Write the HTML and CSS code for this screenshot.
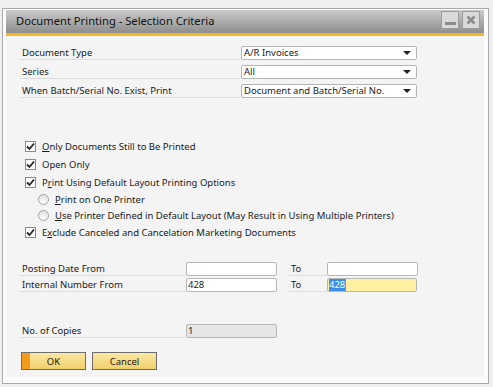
FILE: index.html
```html
<!DOCTYPE html>
<html lang="en">
  <head>
    <meta charset="UTF-8" />
    <title>Document Printing - Selection Criteria</title>
    <link rel="stylesheet" href="styles.css">
  </head>
  <body>
    <div class="window">
      <div class="titlebar">
        <span class="title">Document Printing - Selection Criteria</span>
        <div class="win-btns">
          <span class="win-btn">
            <svg width="11" height="3" viewBox="0 0 11 3"><rect width="11" height="3" fill="#8c8c8c" /></svg>
          </span>
          <span class="win-btn">
            <svg width="10" height="10" viewBox="0 0 10 10"><path d="M1.5 1.5 L8.5 8.5 M8.5 1.5 L1.5 8.5" stroke="#8c8c8c" stroke-width="2.6" /></svg>
          </span>
        </div>
      </div>

      <div class="content">
        <div class="fields">
          <div class="field-row">
            <span class="label">Document Type</span>
            <div class="select">A/R Invoices<span class="arrow"></span></div>
          </div>
          <div class="field-row">
            <span class="label">Series</span>
            <div class="select">All<span class="arrow"></span></div>
          </div>
          <div class="field-row">
            <span class="label">When Batch/Serial No. Exist, Print</span>
            <div class="select">Document and Batch/Serial No.<span class="arrow"></span></div>
          </div>
        </div>

        <div class="options">
          <div class="check">
            <span class="box"><svg width="9" height="9" viewBox="0 0 9 9"><path d="M1 4.5 L3.5 7 L8 1.5" fill="none" stroke="#222" stroke-width="1.8" /></svg></span>
            <span><u>O</u>nly Documents Still to Be Printed</span>
          </div>
          <div class="check">
            <span class="box"><svg width="9" height="9" viewBox="0 0 9 9"><path d="M1 4.5 L3.5 7 L8 1.5" fill="none" stroke="#222" stroke-width="1.8" /></svg></span>
            <span>Open Only</span>
          </div>
          <div class="check">
            <span class="box"><svg width="9" height="9" viewBox="0 0 9 9"><path d="M1 4.5 L3.5 7 L8 1.5" fill="none" stroke="#222" stroke-width="1.8" /></svg></span>
            <span>P<u>r</u>int Using Default Layout Printing Options</span>
          </div>
          <div class="radio">
            <span class="dot"></span>
            <span><u>P</u>rint on One Printer</span>
          </div>
          <div class="radio">
            <span class="dot"></span>
            <span><u>U</u>se Printer Defined in Default Layout (May Result in Using Multiple Printers)</span>
          </div>
          <div class="check">
            <span class="box"><svg width="9" height="9" viewBox="0 0 9 9"><path d="M1 4.5 L3.5 7 L8 1.5" fill="none" stroke="#222" stroke-width="1.8" /></svg></span>
            <span>E<u>x</u>clude Canceled and Cancelation Marketing Documents</span>
          </div>
        </div>

        <div class="ranges">
          <div class="range-row">
            <span class="label short">Posting Date From</span>
            <div class="input"></div>
            <span class="to">To</span>
            <div class="input"></div>
          </div>
          <div class="range-row">
            <span class="label short">Internal Number From</span>
            <div class="input">428</div>
            <span class="to">To</span>
            <div class="input active"><span class="selected">428</span><span class="caret"></span></div>
          </div>
        </div>

        <div class="range-row copies">
          <span class="label short">No. of Copies</span>
          <div class="input disabled">1</div>
        </div>

        <div class="buttons">
          <button class="btn default">OK</button>
          <button class="btn">Cancel</button>
        </div>
      </div>
    </div>
  </body>
</html>
```

FILE: styles.css
```css
* {
  box-sizing: border-box;
  margin: 0;
  padding: 0;
}

body {
  background-color: #efefef;
  font-family: "Noto Sans", Arial, sans-serif;
  font-size: 9.5px;
  color: #1a1a1a;
}

.window {
  width: 487px;
  height: 376px;
  margin: 8px 0 0 2px;
  padding: 1px 4px 6px 3px;
  border: 1px solid #a9a9a9;
  background-color: #fbfbfb;
  display: flex;
  flex-direction: column;
}

.titlebar {
  height: 26px;
  flex-shrink: 0;
  display: flex;
  align-items: center;
  justify-content: space-between;
  padding: 0 4px 3px 10px;
  background: linear-gradient(#cacaca, #8e8e8e);
  border-bottom: 3px solid #f6b81b;
}

.title {
  font-size: 11.2px;
  color: #111;
}

.win-btns {
  display: flex;
  gap: 3px;
}

.win-btn {
  width: 18px;
  height: 18px;
  display: flex;
  align-items: center;
  justify-content: center;
  background-color: #dadada;
  border: 1px solid #9c9c9c;
}

.win-btn:first-child {
  align-items: flex-end;
  padding-bottom: 3px;
}

.content {
  flex: 1;
  background-color: #f4f4f4;
  padding: 5px 0 0 14px;
}

.field-row {
  display: flex;
  align-items: flex-end;
  height: 19px;
}

.label {
  width: 220px;
  height: 14px;
  line-height: 13px;
  padding-left: 2px;
  border-bottom: 1px solid #dcdcdc;
  margin-right: 1px;
}

.label.short {
  width: 166px;
  margin-right: 0;
}

.select {
  position: relative;
  width: 176px;
  height: 14px;
  line-height: 12px;
  padding-left: 2px;
  background-color: #fff;
  border: 1px solid #b5b5b5;
  border-radius: 2px;
}

.arrow {
  position: absolute;
  right: 5px;
  top: 4px;
  border-left: 4px solid transparent;
  border-right: 4px solid transparent;
  border-top: 4px solid #222;
}

.options {
  margin-top: 39px;
}

.check,
.radio {
  display: flex;
  align-items: center;
  height: 18px;
}

.radio {
  height: 16px;
  padding-left: 12px;
}

.box {
  width: 11px;
  height: 11px;
  margin: 0 6px 0 5px;
  background-color: #fff;
  border: 1px solid #8a8a8a;
  display: flex;
  align-items: center;
  justify-content: center;
}

.dot {
  width: 11px;
  height: 11px;
  margin: 0 6px 0 6px;
  border-radius: 50%;
  border: 1px solid #a2a2a2;
  background: linear-gradient(#e2e2e2, #fdfdfd);
}

.ranges {
  margin-top: 19px;
}

.range-row {
  display: flex;
  align-items: flex-end;
  height: 16px;
}

.input {
  width: 91px;
  height: 14px;
  line-height: 12px;
  padding-left: 1px;
  background-color: #fff;
  border: 1px solid #b7b7b7;
  border-radius: 2px;
}

.to {
  width: 39px;
  height: 14px;
  line-height: 13px;
  margin-left: 11px;
  padding-left: 3px;
  border-bottom: 1px solid #dcdcdc;
}

.input.active {
  width: 90px;
  background-color: #fff0a3;
  display: flex;
}

.selected {
  background-color: #3d8ee8;
  color: #fff;
}

.caret {
  width: 1px;
  background-color: #e8722a;
}

.input.disabled {
  background-color: #e6e6e6;
}

.copies {
  margin-top: 30px;
}

.buttons {
  display: flex;
  gap: 6px;
  margin-top: 14px;
  padding-left: 1px;
}

.btn {
  width: 65px;
  height: 18px;
  font-family: inherit;
  font-size: 9.5px;
  color: #1a1a1a;
  background: linear-gradient(#fbe7a5, #f2d06a);
  border: 1px solid #6d6d6d;
}

.btn.default {
  background: linear-gradient(to right, #f39b1c 0, #f39b1c 8px, transparent 8px),
    linear-gradient(#fbe7a5, #f2d06a);
}
```
